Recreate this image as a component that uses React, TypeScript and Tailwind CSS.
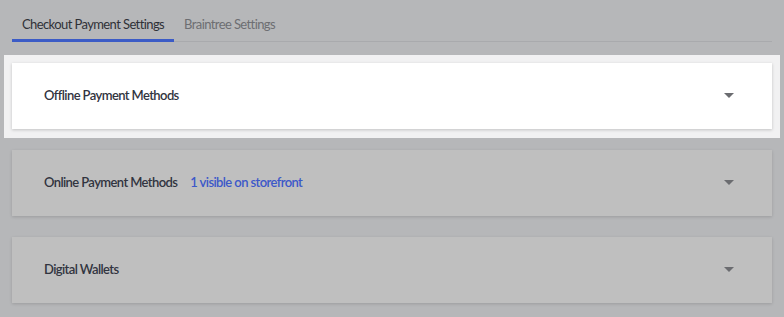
import React from "react";

function Caret() {
  return (
    <svg width="10" height="6" viewBox="0 0 10 6" className="shrink-0">
      <path d="M0 0 H10 L5 5 Z" fill="#6b6c70" />
    </svg>
  );
}

export default function App() {
  const font = { fontFamily: 'Lato, "Open Sans", sans-serif' };
  return (
    <div className="w-[784px] h-[317px] bg-[#b6b7b9] overflow-hidden" style={font}>
      <div className="px-[12px] pt-[14px]">
        <div className="flex border-b border-[#a9aaad] h-[28px]">
          <div className="px-[10px] text-[13px] tracking-[-0.6px] text-[#2f3137] border-b-[3px] border-[#3b5bc6] -mb-px leading-[21px]">
            Checkout Payment Settings
          </div>
          <div className="px-[10px] text-[13px] tracking-[-0.6px] text-[#6d6e72] leading-[21px]">Braintree Settings</div>
        </div>
      </div>
      <div className="mx-[4px] mt-[13px] bg-[#f1f1f2] p-[8px] pb-[9px]">
        <div className="h-[66px] bg-white shadow-[0_1px_3px_rgba(0,0,0,0.2)] flex items-center pl-[32px] pr-[38px]">
          <div className="flex-1 text-[13px] tracking-[-0.6px] font-semibold text-[#313440]">Offline Payment Methods</div>
          <Caret />
        </div>
      </div>
      <div className="px-[12px] mt-[12px] flex flex-col gap-[21px]">
        <div className="h-[66px] bg-[#bfbfbf] shadow-[0_1px_3px_rgba(0,0,0,0.15)] flex items-center pl-[32px] pr-[38px]">
          <div className="flex-1 flex gap-[13px] text-[13px] tracking-[-0.6px] font-semibold">
            <span className="text-[#313440]">Online Payment Methods</span>
            <span className="text-[#3c58c9]">1 visible on storefront</span>
          </div>
          <Caret />
        </div>
        <div className="h-[66px] bg-[#bfbfbf] shadow-[0_1px_3px_rgba(0,0,0,0.15)] flex items-center pl-[32px] pr-[38px]">
          <div className="flex-1 text-[13px] tracking-[-0.6px] font-semibold text-[#313440]">Digital Wallets</div>
          <Caret />
        </div>
      </div>
    </div>
  );
}
